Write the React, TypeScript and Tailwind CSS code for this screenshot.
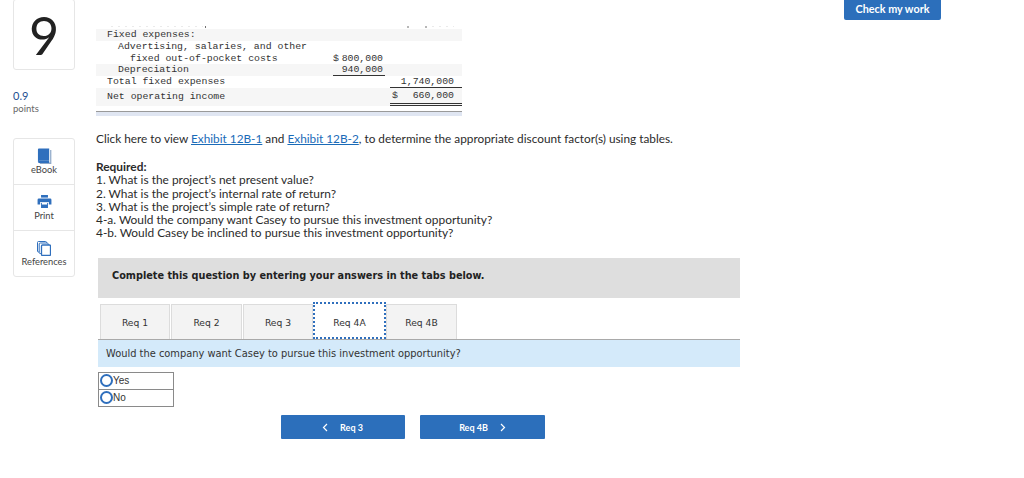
export default function App() {
  const side = [
    { label: 'eBook', cls: 'h-[46px] gap-[1px] border-b border-[#e6e6e6]', icon: <svg width="15" height="16" viewBox="0 0 16 17"><path d="M1 1.500A1 1 0 0 1 2 .5h11v13H2.500A1.500 1.500 0 0 0 1 15z" fill="#2f6fbd"/><path d="M14 2h1.300v15H3v-1.500h11z" fill="#8fa9c9"/><path d="M1 15a1.500 1.500 0 0 1 1.500-1.500H13V16H2.500A1.500 1.500 0 0 1 1 15z" fill="#2f6fbd"/></svg> },
    { label: 'Print', cls: 'h-[46px] gap-[3px] border-b border-[#e6e6e6]', icon: <svg width="15" height="13" viewBox="0 0 16 15"><path d="M4 0h8v3H4z" fill="#2f6fbd"/><path d="M1.500 4h13A1.500 1.500 0 0 1 16 5.500V11h-3V8H3v3H0V5.500A1.500 1.500 0 0 1 1.500 4z" fill="#2f6fbd"/><path d="M4 9h8v6H4z" fill="#2f6fbd"/><path d="M5 9h6v2H5z" fill="#fff"/></svg> },
    { label: 'References', cls: 'h-[45px] gap-[1px]', icon: <svg width="14" height="15" viewBox="0 0 14 15" fill="#fff" stroke="#2f6fbd"><rect x=".5" y=".5" width="9" height="10.500" rx="1"/><rect x="2.200" y="2" width="9" height="10.500" rx="1"/><rect x="4.500" y="4" width="9" height="10.500" rx="1" strokeWidth="1.300"/></svg> },
  ];
  const tab = 'h-[35px] pt-[3px] bg-[#f3f3f3] border border-b-0 border-[#dcdcdc] flex items-center justify-center';
  return (
    <div className="h-[478px] w-[1024px] overflow-hidden bg-white flex font-['Lato',sans-serif] text-[#2b2b2b]">
      <aside className="ml-[13px] w-[62px] shrink-0">
        <div className="h-[71px] -mt-[1px] border border-[#e6e6e6] rounded-[3px] flex items-center justify-center text-[52px] leading-none text-[#222]">9</div>
        <div className="mt-[19px] text-[11px] leading-[13px] text-[#1d4f91]">0.9</div>
        <div className="text-[9.500px] leading-[13px] text-[#666]">points</div>
        <div className="mt-[23px] border border-[#e6e6e6] rounded-[3px]">
          {side.map((s) => (
            <div key={s.label} className={`flex flex-col items-center justify-end pb-[9px] ${s.cls}`}>
              {s.icon}
              <span className="text-[9.300px] leading-[10px] text-[#444] whitespace-nowrap">{s.label}</span>
            </div>
          ))}
        </div>
      </aside>

      <main className="ml-[21px] w-[646px] shrink-0">
        <div className="mt-[25px] w-[366px] font-['Liberation_Mono',monospace] text-[9.850px] leading-[12px] text-[#333]">
          <svg width="366" height="3" viewBox="0 0 366 3" className="block" stroke="#333" fill="none">
            <path d="M15 1.500h92" strokeDasharray="2 5" strokeOpacity=".1" />
            <path d="M109.500 1v2" strokeOpacity=".7" />
            <path d="M312 1v2M330 1v2" strokeOpacity=".7" />
            <path d="M336 1.500h22" strokeDasharray="2 5" strokeOpacity=".1" />
          </svg>
          <div className="mt-[1px] h-[12px] bg-[#f6f6f6] pl-[11px]">Fixed expenses:</div>
          <div className="h-[12px] pl-[22px]">Advertising, salaries, and other</div>
          <div className="h-[11px] flex">
            <div className="pl-[34px] w-[237px]">fixed out-of-pocket costs</div>
            <div className="w-[50px] flex justify-between whitespace-nowrap"><span>$</span><span>800,000</span></div>
          </div>
          <div className="h-[12px] flex bg-[#f6f6f6]">
            <div className="pl-[22px] w-[237px]">Depreciation</div>
            <div className="w-[52px] pr-[2px] text-right border-b border-[#333]">940,000</div>
          </div>
          <div className="h-[12px] flex">
            <div className="pl-[11px] w-[294px]">Total fixed expenses</div>
            <div className="w-[72px] text-right pr-[8px] border-b border-[#333] whitespace-nowrap">1,740,000</div>
          </div>
          <div className="h-[18px] flex items-center bg-[#f6f6f6]">
            <div className="pl-[11px] w-[294px]">Net operating income</div>
            <div className="w-[72px] h-[18px] flex justify-between items-center pl-[2px] pr-[8px] border-b-[3px] border-double border-[#333]"><span>$</span><span>660,000</span></div>
          </div>
          <div className="mt-[5px] h-[5px] bg-[#e0e6f2] border-t border-[#9a9a9a]"></div>
        </div>

        <p className="mt-[16px] text-[11.800px] leading-[14px] whitespace-nowrap">
          Click here to view <span className="text-[#1a6bb8] underline">Exhibit 12B-1</span> and <span className="text-[#1a6bb8] underline">Exhibit 12B-2</span>, to determine the appropriate discount factor(s) using tables.
        </p>
        <div className="mt-[14px] text-[11.900px] leading-[13.300px]">
          <div className="font-bold">Required:</div>
          <div>1. What is the project’s net present value?</div>
          <div>2. What is the project’s internal rate of return?</div>
          <div>3. What is the project’s simple rate of return?</div>
          <div>4-a. Would the company want Casey to pursue this investment opportunity?</div>
          <div>4-b. Would Casey be inclined to pursue this investment opportunity?</div>
        </div>

        <div className="mt-[18px] ml-[2px] w-[642px] h-[40px] pb-[3px] bg-[#dedede] flex items-center pl-[14px] font-['DejaVu_Sans',sans-serif] font-bold text-[9.730px] text-[#222]">
          Complete this question by entering your answers in the tabs below.
        </div>

        <div className="ml-[2px] w-[642px] font-['DejaVu_Sans',sans-serif] text-[9.200px] text-[#333]">
          <div className="mt-[5px] h-[37px] pl-[2px] flex items-end border-b border-[#a9a9a9]">
            <div className={`w-[70px] ${tab}`}>Req 1</div>
            <div className={`ml-[1px] w-[71px] ${tab}`}>Req 2</div>
            <div className={`ml-[1px] w-[70px] ${tab}`}>Req 3</div>
            <div className="w-[73px] h-[37px] pt-[5px] bg-white border-2 border-dotted border-[#2f6fbd] flex items-center justify-center">Req 4A</div>
            <div className={`w-[71px] ${tab}`}>Req 4B</div>
          </div>
          <div className="h-[27px] pt-[2px] bg-[#d4eafa] flex items-center pl-[8px] text-[9.870px] whitespace-nowrap">Would the company want Casey to pursue this investment opportunity?</div>
          <div className="mt-[5px] w-[76px] border border-[#8a8a8a] font-['Liberation_Sans',sans-serif] text-[10px]">
            <div className="h-[17px] flex items-center border-b border-[#8a8a8a]"><span className="w-[13px] h-[13px] ml-[1px] rounded-full border-2 border-[#2f6fbd] bg-white" />Yes</div>
            <div className="h-[16px] flex items-center"><span className="w-[13px] h-[13px] ml-[1px] rounded-full border-2 border-[#2f6fbd] bg-white" />No</div>
          </div>
          <div className="mt-[8px] ml-[183px] flex gap-[15px] font-['Lato',sans-serif] font-bold text-[9px] text-white">
            <button className="w-[124px] h-[24px] pt-[1px] bg-[#2c6fbb] rounded-[1px] flex items-center justify-center gap-[12px] pr-[1px]">
              <svg width="6" height="9" viewBox="0 0 6 9" fill="none" stroke="#fff" strokeWidth="1.200"><path d="M5 1 1.500 4.500 5 8" /></svg>
              Req 3
            </button>
            <button className="w-[125px] h-[24px] pt-[1px] bg-[#2c6fbb] rounded-[1px] flex items-center justify-center gap-[12px]">
              Req 4B
              <svg width="6" height="9" viewBox="0 0 6 9" fill="none" stroke="#fff" strokeWidth="1.200"><path d="M1 1 4.500 4.500 1 8" /></svg>
            </button>
          </div>
        </div>
      </main>

      <div className="ml-[102px] w-[97px] shrink-0">
        <button className="block w-[97px] h-[20px] pb-[3px] bg-[#2c6fbb] rounded-b-[2px] text-white font-bold text-[10.800px] leading-[17px]">Check my work</button>
      </div>
    </div>
  );
}
